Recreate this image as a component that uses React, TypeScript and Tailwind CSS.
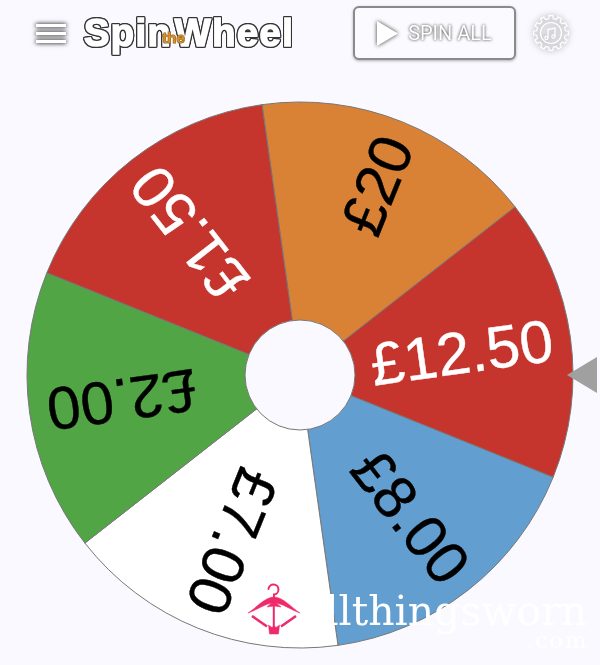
const CX = 300;
const CY = 305;
const R = 273;
const segments = [
  { label: "£20", fill: "#d98236", text: "#000000" },
  { label: "£12.50", fill: "#c5352e", text: "#ffffff" },
  { label: "£8.00", fill: "#629fd0", text: "#000000" },
  { label: "£7.00", fill: "#ffffff", text: "#000000" },
  { label: "£2.00", fill: "#52a545", text: "#000000" },
  { label: "£1.50", fill: "#c5352e", text: "#ffffff" },
];

function point(deg: number, r: number) {
  const a = ((deg - 90) * Math.PI) / 180;
  return [CX + r * Math.cos(a), CY + r * Math.sin(a)];
}

function Wheel() {
  return (
    <svg viewBox="0 0 600 595" className="block w-[600px] h-[595px]">
      {segments.map((s, i) => {
        const start = -8 + i * 60;
        const [x1, y1] = point(start, R);
        const [x2, y2] = point(start + 60, R);
        const mid = start + 30;
        return (
          <g key={i}>
            <path
              d={`M${CX} ${CY}L${x1} ${y1}A${R} ${R} 0 0 1 ${x2} ${y2}Z`}
              fill={s.fill}
              stroke="#777777"
              strokeWidth="1"
            />
            <text
              transform={`rotate(${mid - 90} ${CX} ${CY})`}
              x={CX + 255}
              y={CY + 21}
              textAnchor="end"
              fontFamily="'Liberation Sans', Arial, sans-serif"
              fontSize="60"
              fill={s.text}
              stroke={s.text}
              strokeWidth="0.4"
            >
              {s.label}
            </text>
          </g>
        );
      })}
      <circle cx={CX} cy={CY} r="55" fill="#f9f9ff" stroke="#777777" strokeWidth="1" />
      <polygon points="567,305 597,287 597,323" fill="#a0a0a0" />
    </svg>
  );
}

function Gear() {
  const teeth = Array.from({ length: 12 }, (_, i) => i * 30);
  return (
    <svg viewBox="0 0 40 40" className="w-[40px] h-[40px] [filter:drop-shadow(0_0_3px_rgba(0,0,0,0.5))]" fill="none" stroke="#ffffff" strokeWidth="1.2">
      <path
        d={
          teeth
            .map((deg) => {
              const p = (d: number, r: number) => {
                const a = (d * Math.PI) / 180;
                return `${20 + r * Math.cos(a)} ${20 + r * Math.sin(a)}`;
              };
              return `L${p(deg - 9, 14.5)}L${p(deg - 6, 17.5)}L${p(deg + 6, 17.5)}L${p(deg + 9, 14.5)}`;
            })
            .join("")
            .replace(/^L/, "M") + "Z"
        }
      />
      <circle cx="20" cy="20" r="10.5" />
      <path d="M17 25V16.5L24 15V23.5" strokeWidth="1.3" />
      <circle cx="15.4" cy="25" r="1.6" />
      <circle cx="22.4" cy="23.5" r="1.6" />
    </svg>
  );
}

function HangerBow() {
  return (
    <svg viewBox="0 0 54 56" className="w-[54px] h-[56px]" fill="none" stroke="#ee2a6b">
      <path d="M21.5 7A5 5 0 1 1 27 12.5V17" strokeWidth="2" strokeLinecap="round" />
      <path d="M1 31C9 26 18 15 27 15C36 15 45 26 53 31C44 28 35 21 27 21C19 21 10 28 1 31Z" fill="#ee2a6b" strokeWidth="0.5" />
      <path d="M5 34L20 44.5M49 34L34 44.5" strokeWidth="2.6" />
      <path d="M26.8 18V46" strokeWidth="2" />
      <path d="M20 25L27 19L34 25L27 24Z" fill="#ee2a6b" strokeWidth="0.5" />
      <path d="M21.5 43L25 45.5L27 43.5L29 45.5L32.5 43L31.5 52H22.5Z" fill="#ee2a6b" strokeWidth="0.5" />
    </svg>
  );
}

export default function App() {
  return (
    <div className="relative w-[600px] h-[665px] overflow-hidden bg-[#f9f9ff] font-['Roboto',sans-serif] [filter:blur(0.4px)]">
      <header className="flex items-center h-[70px] pl-[36px] pb-[4px]">
        <div className="flex flex-col gap-[5px] w-[30px] [filter:drop-shadow(0_0_2px_rgba(0,0,0,0.7))_drop-shadow(0_0_2px_rgba(0,0,0,0.4))]">
          <span className="block h-[3px] bg-white" />
          <span className="block h-[3px] bg-white" />
          <span className="block h-[3px] bg-white" />
        </div>
        <div className="flex items-center ml-[18px] w-[269px] font-['Liberation_Sans',Arial,sans-serif] font-bold text-[38px] leading-none text-white tracking-[1.5px]">
          <span className="[-webkit-text-stroke:1.6px_#ffffff] [filter:drop-shadow(1px_0_0_#333333)_drop-shadow(-1px_0_0_#333333)_drop-shadow(0_1px_0_#333333)_drop-shadow(0_-1px_0_#333333)]">Spin</span>
          <span className="relative z-10 -mx-[10px] mt-[8px] text-[15px] tracking-normal text-[#d98f2c] [-webkit-text-stroke:1.2px_#8a6420] [paint-order:stroke_fill]">the</span>
          <span className="[-webkit-text-stroke:1.6px_#ffffff] [filter:drop-shadow(1px_0_0_#333333)_drop-shadow(-1px_0_0_#333333)_drop-shadow(0_1px_0_#333333)_drop-shadow(0_-1px_0_#333333)]">Wheel</span>
        </div>
        <button className="flex items-center justify-center gap-[10px] w-[163px] h-[54px] rounded-md border-2 border-[#8a8a8a] bg-[#fbfbff] shadow-[0_1px_3px_rgba(0,0,0,0.3)]">
          <svg viewBox="0 0 21 25" className="w-[21px] h-[25px] [filter:drop-shadow(0_0_2px_rgba(0,0,0,0.8))]">
            <polygon points="0,0 21,12.5 0,25" fill="#ffffff" />
          </svg>
          <span className="text-[20px] text-white [text-shadow:0_0_3px_rgba(0,0,0,0.9)]">SPIN ALL</span>
        </button>
        <div className="ml-[15px]">
          <Gear />
        </div>
      </header>
      <Wheel />
      <div className="absolute left-[247px] top-[582px]">
        <HangerBow />
      </div>
      <div className="absolute left-[301px] top-[585px] font-['DejaVu_Serif',serif] text-[41px] leading-[52px] tracking-[0px] text-white">
        allthingsworn
      </div>
      <div className="absolute right-[12px] top-[626px] font-['DejaVu_Serif',serif] text-[23px] leading-[28px] tracking-[1.5px] text-white">
        .com
      </div>
    </div>
  );
}
